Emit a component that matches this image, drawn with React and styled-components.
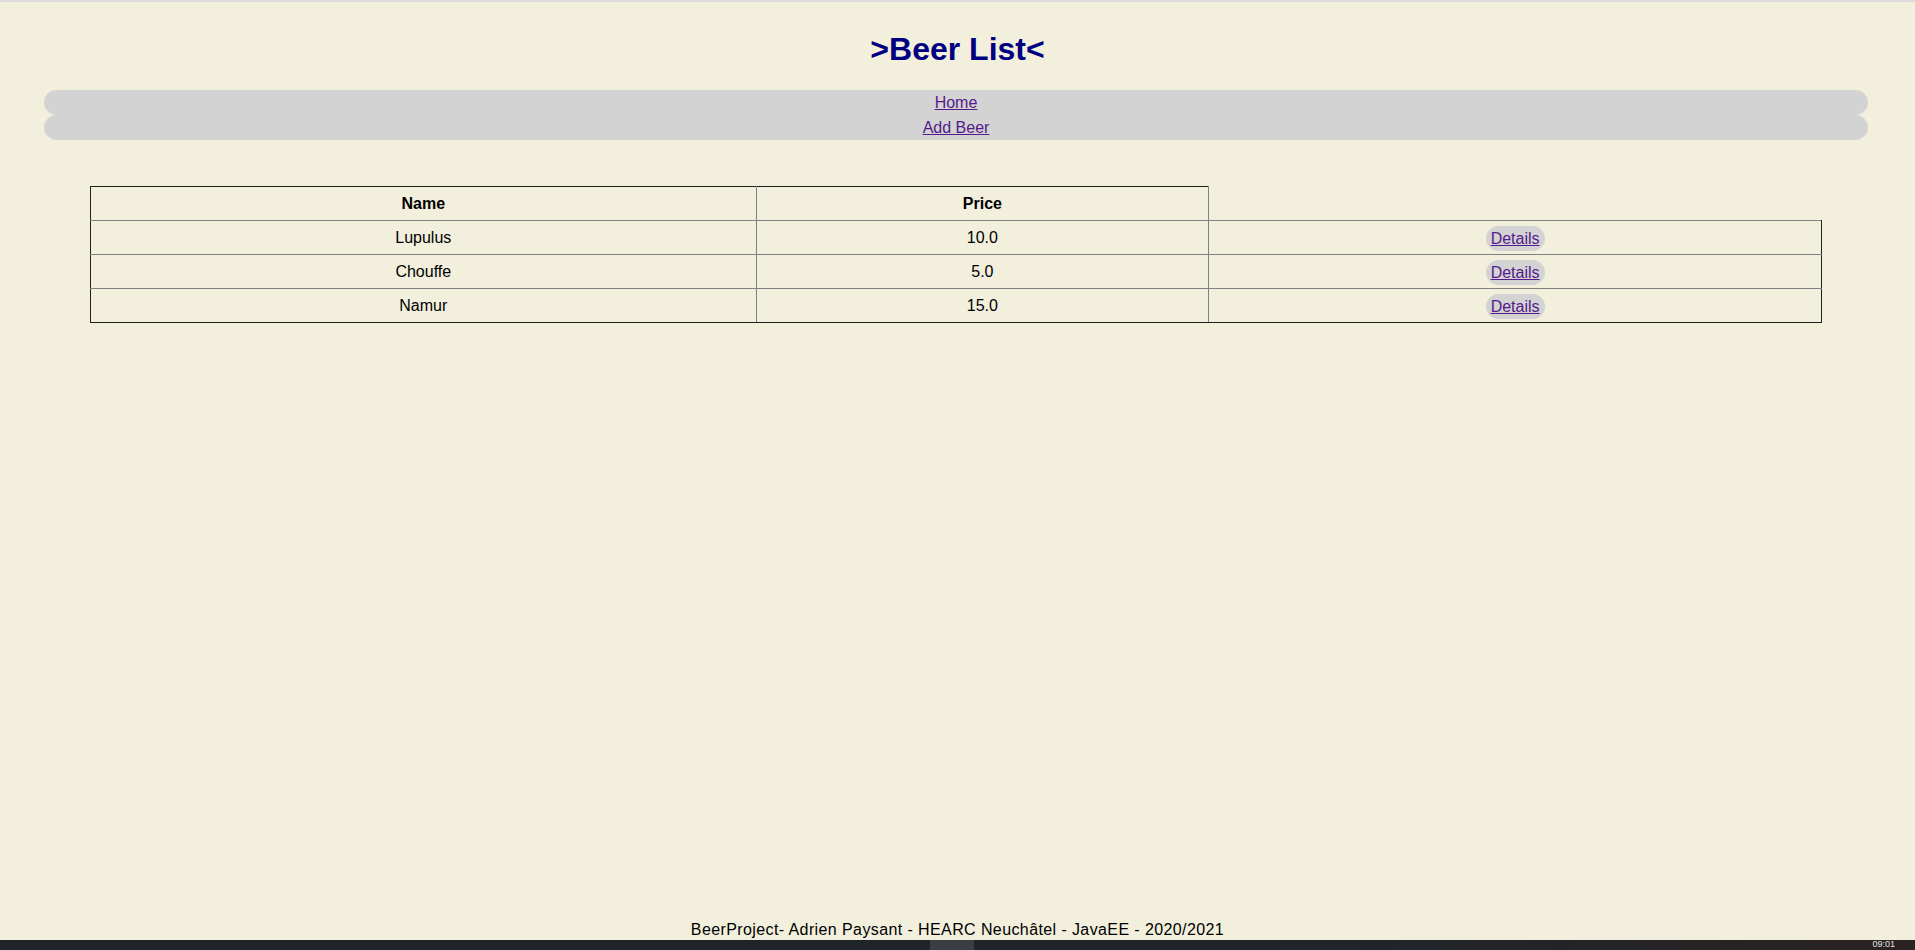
import React from "react";
import styled, { createGlobalStyle } from "styled-components";

const beers = [
  { id: 1, name: "Lupulus", price: "10.0" },
  { id: 2, name: "Chouffe", price: "5.0" },
  { id: 3, name: "Namur", price: "15.0" },
];

export default function App() {
  return (
    <>
      <GlobalStyle />
      <Page>
        <Title>&gt;Beer List&lt;</Title>
        <Nav>
          <NavItem>
            <Link href="#">Home</Link>
          </NavItem>
          <NavItem>
            <Link href="#">Add Beer</Link>
          </NavItem>
        </Nav>

        <BeerTable>
          <colgroup>
            <col style={{ width: "38.45%" }} />
            <col style={{ width: "26.15%" }} />
            <col style={{ width: "35.4%" }} />
          </colgroup>
          <thead>
            <tr>
              <Th>Name</Th>
              <Th>Price</Th>
            </tr>
          </thead>
          <tbody>
            {beers.map((beer) => (
              <tr key={beer.id}>
                <Td>{beer.name}</Td>
                <Td>{beer.price}</Td>
                <Td>
                  <DetailsLink href="#">Details</DetailsLink>
                </Td>
              </tr>
            ))}
          </tbody>
        </BeerTable>

        <Footer>BeerProject- Adrien Paysant - HEARC Neuchâtel - JavaEE - 2020/2021</Footer>
        <Taskbar>
          <ActiveApp />
          <Clock>09:01</Clock>
        </Taskbar>
      </Page>
    </>
  );
}

const GlobalStyle = createGlobalStyle`
  html, body {
    margin: 0;
    padding: 0;
    background: #f2efdd;
  }
  body {
    font-family: "Comic Sans MS", "Liberation Sans", sans-serif;
    font-size: 16px;
    color: #000000;
  }
`;

const Page = styled.div`
  min-height: 100vh;
  display: flex;
  flex-direction: column;
  border-top: 2px solid #dcdcdc;
  box-sizing: border-box;
`;

const Title = styled.h1`
  margin: 29px 0 0;
  text-align: center;
  font-size: 32px;
  line-height: 37px;
  font-weight: 700;
  color: #000080;
`;

const Nav = styled.ul`
  list-style: none;
  margin: 22px 47px 0 44px;
  padding: 0;
`;

const NavItem = styled.li`
  height: 25px;
  line-height: 26px;
  background: #d3d3d3;
  border-radius: 12.5px;
  text-align: center;
`;

const Link = styled.a`
  color: #551a8b;
  text-decoration: underline;
`;

const BeerTable = styled.table`
  border-collapse: collapse;
  table-layout: fixed;
  width: calc(100% - 183px);
  margin: 46px 93px 0 90px;

  tbody tr:last-child td {
    border-bottom-color: #222222;
  }
  tbody td:last-child {
    border-right-color: #222222;
  }
  tr > :first-child {
    border-left-color: #222222;
  }
`;

const Th = styled.th`
  border: 1px solid #808080;
  border-top-color: #222222;
  padding: 1px 0 0;
  height: 32px;
  line-height: 32px;
  font-weight: 700;
  text-align: center;
`;

const Td = styled.td`
  border: 1px solid #808080;
  padding: 1px 0 0;
  height: 32px;
  line-height: 32px;
  text-align: center;
`;

const DetailsLink = styled.a`
  display: inline-block;
  vertical-align: middle;
  line-height: 25px;
  padding: 0 5px;
  background: #d3d3d3;
  border-radius: 12.5px;
  color: #551a8b;
  text-decoration: underline;
`;

const Footer = styled.footer`
  margin-top: auto;
  text-align: center;
  line-height: 20px;
  font-size: 16px;
  letter-spacing: 0.4px;
`;

const Taskbar = styled.div`
  height: 10px;
  background: linear-gradient(90deg, #1f2327 0%, #20252a 70%, #2a2222 100%);
  display: flex;
  align-items: flex-start;
`;

const ActiveApp = styled.div`
  margin-left: 930px;
  width: 44px;
  height: 10px;
  background: #3a3e44;
`;

const Clock = styled.span`
  margin-left: auto;
  margin-right: 20px;
  font-size: 9px;
  line-height: 9px;
  color: #e0e0e0;
  font-family: "Liberation Sans", sans-serif;
`;
